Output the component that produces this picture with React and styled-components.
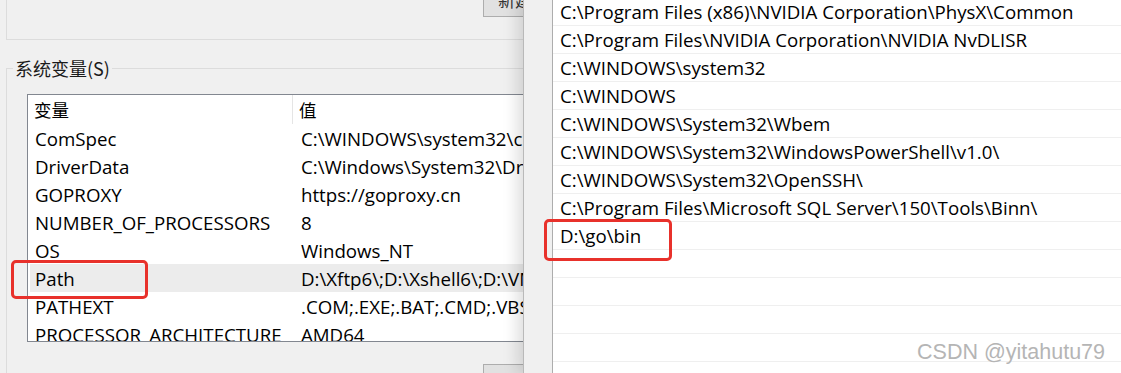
import React from "react";
import styled, { createGlobalStyle } from "styled-components";

const GlobalStyle = createGlobalStyle`
  body {
    margin: 0;
    overflow: hidden;
    background: #f0f0f0;
    font-family: "Open Sans", "Noto Sans CJK SC", sans-serif;
    color: #000;
  }
`;

const systemVars = [
  { name: "ComSpec", value: "C:\\WINDOWS\\system32\\cmd.exe" },
  { name: "DriverData", value: "C:\\Windows\\System32\\Drivers\\DriverData" },
  { name: "GOPROXY", value: "https://goproxy.cn" },
  { name: "NUMBER_OF_PROCESSORS", value: "8" },
  { name: "OS", value: "Windows_NT" },
  { name: "Path", value: "D:\\Xftp6\\;D:\\Xshell6\\;D:\\VMware\\bin\\", selected: true },
  { name: "PATHEXT", value: ".COM;.EXE;.BAT;.CMD;.VBS;.VBE;.JS" },
  { name: "PROCESSOR_ARCHITECTURE", value: "AMD64" },
];

const pathEntries = [
  "C:\\Program Files (x86)\\NVIDIA Corporation\\PhysX\\Common",
  "C:\\Program Files\\NVIDIA Corporation\\NVIDIA NvDLISR",
  "C:\\WINDOWS\\system32",
  "C:\\WINDOWS",
  "C:\\WINDOWS\\System32\\Wbem",
  "C:\\WINDOWS\\System32\\WindowsPowerShell\\v1.0\\",
  "C:\\WINDOWS\\System32\\OpenSSH\\",
  "C:\\Program Files\\Microsoft SQL Server\\150\\Tools\\Binn\\",
  "D:\\go\\bin",
  "",
  "",
  "",
  "",
  "",
];

const App = () => {
  return (
    <>
      <GlobalStyle />
      <Screen>
        <LeftPane>
          <TopGroup>
            <DialogButton $top>新建(W)...</DialogButton>
          </TopGroup>
          <Group>
            <Legend>系统变量(S)</Legend>
            <ListBox>
              <HeaderRow>
                <HeaderCell $divider>变量</HeaderCell>
                <HeaderCell>值</HeaderCell>
              </HeaderRow>
              {systemVars.map((v) => (
                <VarRow key={v.name} $selected={v.selected}>
                  <NameCell>{v.name}</NameCell>
                  <ValueCell>{v.value}</ValueCell>
                </VarRow>
              ))}
            </ListBox>
            <DialogButton>新建(W)...</DialogButton>
          </Group>
        </LeftPane>

        <EditWindow>
          <PathList>
            {pathEntries.map((p, index) => (
              <PathRow key={index}>{p}</PathRow>
            ))}
          </PathList>
        </EditWindow>

        <Highlight style={{ left: 11, top: 260, width: 137, height: 39 }} />
        <Highlight style={{ left: 544, top: 219, width: 128, height: 42 }} />
        <Watermark>CSDN @yitahutu79</Watermark>
      </Screen>
    </>
  );
};

const Screen = styled.div`
  position: relative;
  display: flex;
  width: 1121px;
  height: 373px;
  overflow: hidden;
  background: #f0f0f0;
  font-size: 18.7px;
`;

const LeftPane = styled.div`
  width: 523px;
  flex-shrink: 0;
  overflow: hidden;
`;

const TopGroup = styled.div`
  display: flex;
  width: 700px;
  height: 40px;
  margin-left: 6px;
  box-sizing: border-box;
  border-left: 1px solid #dcdcdc;
  border-bottom: 1px solid #dcdcdc;
`;

const DialogButton = styled.div`
  flex-shrink: 0;
  width: 160px;
  height: ${(p) => (p.$top ? "17px" : "30px")};
  margin: ${(p) => (p.$top ? "0 0 0 476px" : "22px 0 0 456px")};
  box-sizing: border-box;
  background: #e1e1e1;
  border: 1px solid #adadad;
  border-top: ${(p) => (p.$top ? "none" : "1px solid #adadad")};
  padding-left: 14px;
  font-family: "Noto Sans CJK SC", sans-serif;
  font-size: 17px;
  line-height: ${(p) => (p.$top ? "0px" : "56px")};
  color: #333;
  overflow: hidden;
  white-space: nowrap;
`;

const Group = styled.fieldset`
  width: 760px;
  margin: 16px 0 0 6px;
  padding: 2px 0 0 20px;
  border: 1px solid #dcdcdc;
  border-right: none;
  border-bottom: none;
  min-height: 400px;
`;

const Legend = styled.legend`
  margin-left: -14px;
  padding: 0 2px;
  font-family: "Noto Sans CJK SC", sans-serif;
  font-size: 18px;
  line-height: 24px;
  color: #1a1a1a;
`;

const ListBox = styled.div`
  width: 700px;
  height: 248px;
  margin-top: 12px;
  box-sizing: border-box;
  border: 1px solid #828790;
  background: #fff;
  overflow: hidden;
`;

const HeaderRow = styled.div`
  display: grid;
  grid-template-columns: 265px 1fr;
  height: 29px;
`;

const HeaderCell = styled.div`
  display: flex;
  align-items: center;
  padding-left: 6px;
  font-family: "Noto Sans CJK SC", sans-serif;
  font-size: 17.5px;
  border-right: ${(p) => (p.$divider ? "1px solid #e5e5e5" : "none")};
`;

const VarRow = styled.div`
  display: grid;
  grid-template-columns: 265px 1fr;
  height: 28px;
  align-items: center;
  margin-left: 2px;
  background: ${(p) => (p.$selected ? "#ececec" : "transparent")};
`;

const NameCell = styled.div`
  padding-left: 5px;
  white-space: nowrap;
`;

const ValueCell = styled.div`
  padding-left: 6px;
  white-space: nowrap;
`;

const EditWindow = styled.div`
  position: relative;
  flex: 1;
  display: flex;
  background: #f0f0f0;
  border-left: 1px solid #b9b9b9;
  box-shadow: -6px 0 14px rgba(0, 0, 0, 0.13);
`;

const PathList = styled.div`
  flex: 1;
  margin: -2px 0 0 28px;
  border-left: 1px solid #adadad;
  background: #fff;
`;

const PathRow = styled.div`
  height: 28px;
  box-sizing: border-box;
  padding-left: 7px;
  line-height: 28px;
  border-bottom: 1px solid #efefef;
  white-space: nowrap;
`;

const Highlight = styled.div`
  position: absolute;
  box-sizing: border-box;
  border: 3px solid #e8312b;
  border-radius: 5px;
`;

const Watermark = styled.div`
  position: absolute;
  right: 16px;
  bottom: 8px;
  font-family: "Liberation Sans", sans-serif;
  font-size: 21.5px;
  color: #b5b5b5;
`;

export default App;
